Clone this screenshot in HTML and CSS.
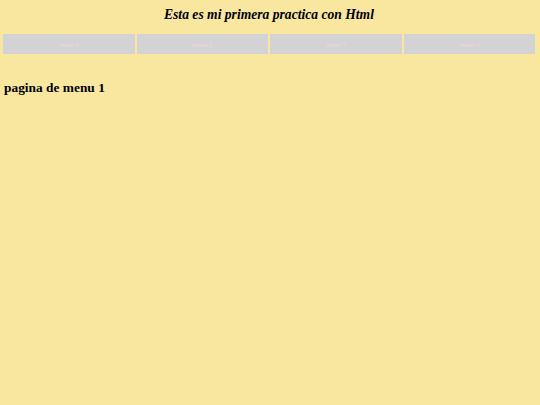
FILE: index.html
```html
<!DOCTYPE html>
<html lang="es">
<head>
<meta charset="utf-8">
<title>Esta es mi primera practica con Html</title>
<link rel="stylesheet" href="styles.css">
</head>
<body>
<header class="page-header">
  <h1 class="page-title">Esta es mi primera practica con Html</h1>
</header>
<nav class="menu">
  <a class="menu-item" href="#">menu 1</a>
  <a class="menu-item" href="#">menu 2</a>
  <a class="menu-item" href="#">menu 3</a>
  <a class="menu-item" href="#">menu 4</a>
</nav>
<main class="content">
  <h2 class="content-title">pagina de menu 1</h2>
</main>
</body>
</html>
```

FILE: styles.css
```css
html, body {
  background: #f9e79f;
}

body {
  margin: 0;
  padding: 0 5px 0 3px;
  font-family: "Liberation Serif", "Times New Roman", serif;
  color: #000;
}

.page-header {
  padding-top: 7px;
}

.page-title {
  margin: 0;
  font-size: 13.6px;
  line-height: 16px;
  font-weight: bold;
  font-style: italic;
  text-align: center;
}

.menu {
  margin-top: 11px;
  display: grid;
  grid-template-columns: repeat(4, 1fr);
  gap: 2px;
}

.menu-item {
  display: flex;
  align-items: center;
  justify-content: center;
  height: 20px;
  background: #d3d3d3;
  color: #f0d6db;
  font-size: 6.8px;
  text-decoration: none;
}

.content-title {
  margin: 26px 0 0 1px;
  font-size: 13.4px;
  line-height: 16px;
  font-weight: bold;
}
```
